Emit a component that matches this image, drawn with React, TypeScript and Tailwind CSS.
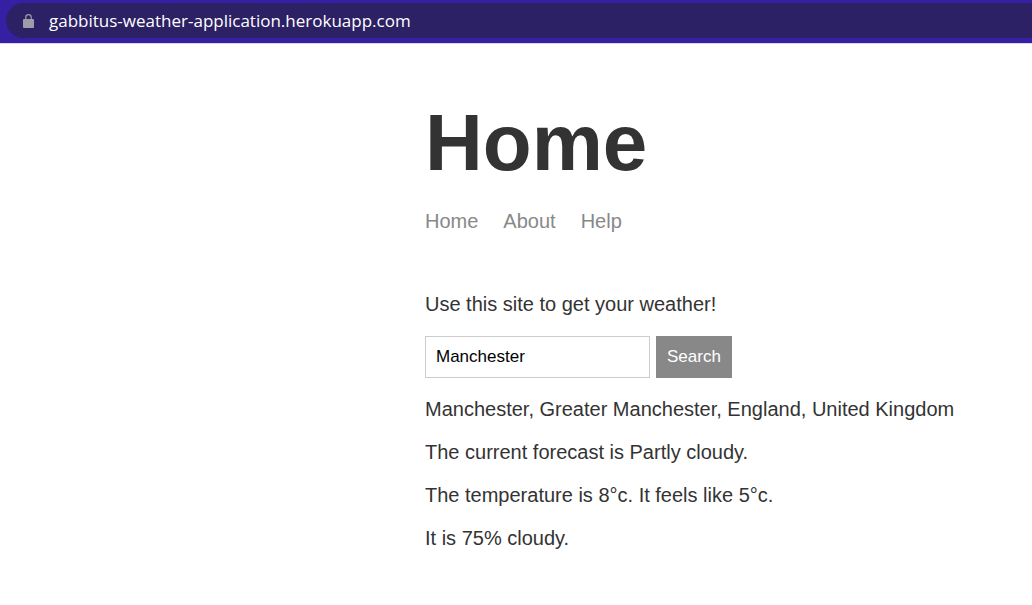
import { useState } from "react";

const links = ["Home", "About", "Help"];

function AddressBar() {
  return (
    <div className="border-b border-[#d9d4ef] bg-[#3520a4] pt-[3px] pb-[5px] pl-[6px]">
      <div className="flex h-[35px] items-center gap-[15px] rounded-l-full bg-[#2b2164] pl-[17px] text-white">
        <svg viewBox="0 0 11 14" className="h-[14px] w-[11px]" aria-hidden="true">
          <rect x="0" y="5" width="11" height="9" rx="1" fill="#9c9da8" />
          <path d="M2.8 5.5V3.3a2.7 2.7 0 0 1 5.4 0v2.2" fill="none" stroke="#9c9da8" strokeWidth="1.2" />
        </svg>
        <span className="font-['Open_Sans',sans-serif] text-[17px] leading-[24px]">
          gabbitus-weather-application.herokuapp.com
        </span>
      </div>
    </div>
  );
}

export default function App() {
  const [place, setPlace] = useState("Manchester");
  return (
    <div className="min-h-screen bg-white font-['Liberation_Sans',Arial,sans-serif] text-[20px] leading-[23px] text-[#333333]">
      <AddressBar />
      <main className="pt-[53px] pr-4 pb-10 pl-[425px]">
        <h1 className="text-[80px] leading-[92px] font-bold">Home</h1>
        <nav className="mt-[21px] flex gap-[25px] text-[#888888]">
          {links.map((name) => (
            <a key={name} href={`#${name.toLowerCase()}`}>{name}</a>
          ))}
        </nav>
        <p className="mt-[60px]">Use this site to get your weather!</p>
        <form className="mt-[20px] flex gap-[6px] text-[17px]" onSubmit={(e) => e.preventDefault()}>
          <input
            aria-label="Location"
            value={place}
            onChange={(e) => setPlace(e.target.value)}
            className="h-[42px] w-[225px] border border-[#cccccc] px-[10px] text-black outline-none"
          />
          <button type="submit" className="h-[42px] bg-[#888888] px-[11px] pb-[2px] text-white">
            Search
          </button>
        </form>
        <div className="mt-[20px] space-y-5">
          <p>Manchester, Greater Manchester, England, United Kingdom</p>
          <p>The current forecast is Partly cloudy.</p>
          <p>The temperature is 8°c. It feels like 5°c.</p>
          <p>It is 75% cloudy.</p>
        </div>
      </main>
    </div>
  );
}
